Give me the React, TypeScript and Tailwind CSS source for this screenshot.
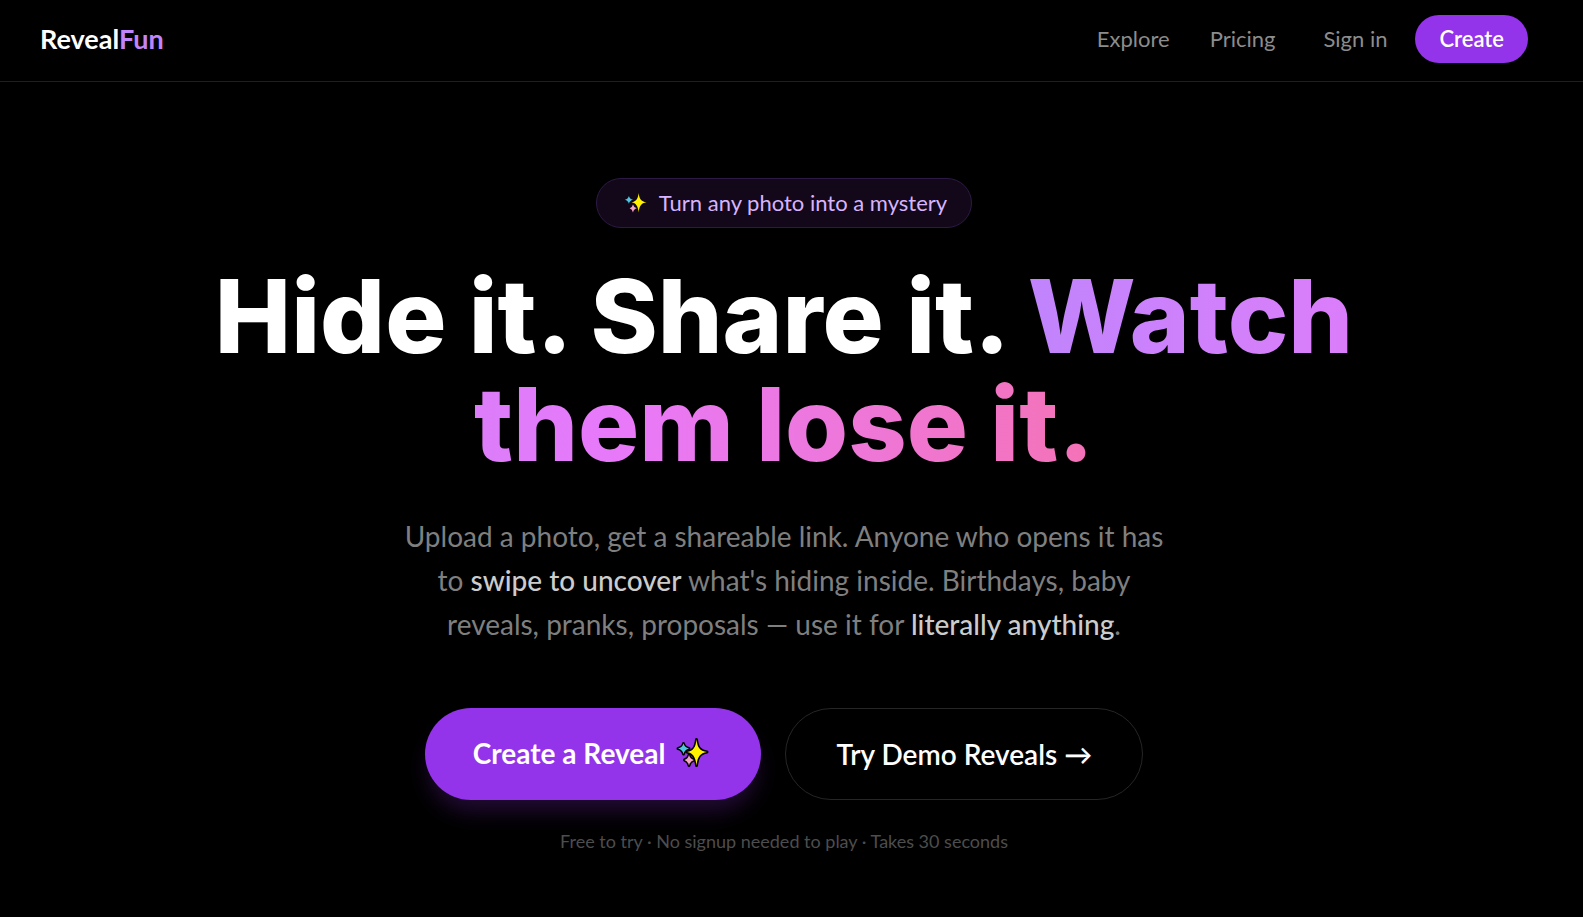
type SparklesProps = {
  className?: string
  outlined?: boolean
}

function Sparkles({ className, outlined = false }: SparklesProps) {
  return (
    <svg
      viewBox="0 0 40 32"
      className={className}
      stroke={outlined ? '#000000' : 'none'}
      strokeWidth="3"
      strokeLinejoin="round"
      paintOrder="stroke"
      aria-hidden="true"
    >
      <path
        fill="#4fc3e0"
        d="M10.5 6.5Q11.5 10.5 16 11.5Q11.5 12.5 10.5 17Q9.5 12.5 5 11.5Q9.5 10.5 10.5 6.5Z"
      />
      <path
        fill="#f4a6c4"
        d="M16 18Q17 22 21 23Q17 24 16 28.5Q15 24 11.5 23Q15 22 16 18Z"
      />
      <path
        fill="#fff100"
        d="M23.5 2.5C24.4 10.5 26.5 13.8 34 15C26.5 16.2 24.4 20.5 23.5 28.5C22.6 20.5 20.5 16.2 14 15C20.5 13.8 22.6 10.5 23.5 2.5Z"
      />
    </svg>
  )
}

function Header() {
  return (
    <header className="border-b border-[#1f1f1f] pr-[15px]">
      <div className="flex items-center justify-between px-10 pt-[15px] pb-[18px]">
        <a href="#home" className="text-[27px] leading-9 font-bold text-white">
          Reveal<span className="text-[#c084fc]">Fun</span>
        </a>
        <nav className="flex items-center text-[22px] leading-[30px] text-[#8c8c8c]" aria-label="Main">
          <div className="flex items-center gap-10">
            <a href="#explore">Explore</a>
            <a href="#pricing">Pricing</a>
          </div>
          <button type="button" className="ml-12">
            Sign in
          </button>
          <button
            type="button"
            className="ml-7 rounded-full bg-[#9333ea] px-6 py-[9px] font-semibold text-white"
          >
            Create
          </button>
        </nav>
      </div>
    </header>
  )
}

function Hero() {
  return (
    <main className="pr-[15px]">
      <section className="flex flex-col items-center px-10 pt-24 pb-16 text-center">
        <div className="flex items-center gap-2 rounded-full border border-[#2c1a45] bg-[#12081a] px-6 py-[9px] text-[22px] leading-[30px] text-[#d8b4fe]">
          <Sparkles className="h-6 w-[30px]" />
          <span>Turn any photo into a mystery</span>
        </div>

        <h1 className="mt-[34px] max-w-[1344px] font-['Inter',sans-serif] text-[102px] leading-[108px] font-extrabold text-white">
          Hide it. Share it.{' '}
          <span className="bg-linear-to-r from-[#c084fc] via-[#e879f9] to-[#f472b6] bg-clip-text text-transparent">
            Watch them lose it.
          </span>
        </h1>

        <p className="mt-9 max-w-3xl text-[28px] leading-[44px] text-[#7f7f7f]">
          Upload a photo, get a shareable link. Anyone who opens it has to{' '}
          <span className="font-medium text-[#cccccc]">swipe to uncover</span> what's hiding inside.
          Birthdays, baby reveals, pranks, proposals — use it for{' '}
          <span className="font-medium text-[#cccccc]">literally anything</span>.
        </p>

        <div className="mt-[62px] flex flex-wrap items-stretch justify-center gap-6 text-[28px] leading-[42px]">
          <button
            type="button"
            className="flex items-center gap-2 rounded-full bg-[#9333ea] px-12 pt-6 pb-[26px] font-bold text-white shadow-[0_15px_22px_-4px_rgba(88,28,135,0.4)]"
          >
            Create a Reveal
            <Sparkles outlined className="h-8 w-10" />
          </button>
          <button
            type="button"
            className="rounded-full border border-[#262626] px-[50px] py-6 font-semibold text-white"
          >
            Try Demo Reveals →
          </button>
        </div>

        <p className="mt-[27px] text-[18px] leading-7 text-[#4d4d4d]">
          Free to try · No signup needed to play · Takes 30 seconds
        </p>
      </section>
    </main>
  )
}

export default function App() {
  return (
    <div className="min-h-screen bg-black font-['Lato',sans-serif] text-white">
      <Header />
      <Hero />
    </div>
  )
}
